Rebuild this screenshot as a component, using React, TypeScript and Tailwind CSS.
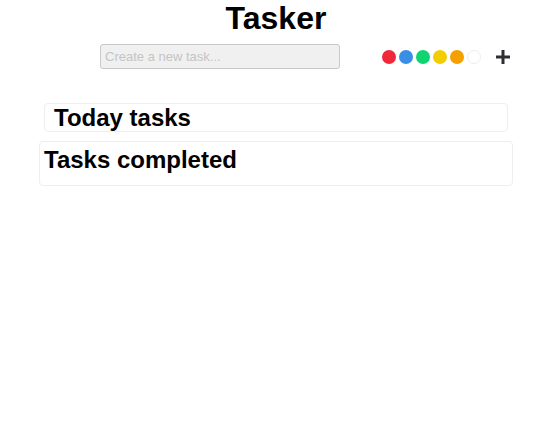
const colors = ['bg-[#f0283a]', 'bg-[#3b8ee5]', 'bg-[#10d46f]', 'bg-[#f2cd00]', 'bg-[#f5a000]', 'bg-white border border-[#eeeeee]'];

export default function App() {
  return (
    <div className="min-h-screen bg-white text-black" style={{ fontFamily: '"Liberation Sans", Arial, sans-serif' }}>
      <h1 className="w-[552px] text-center text-[32px] font-bold leading-[37px]">Tasker</h1>

      <div className="mt-[7px] flex items-center pl-[100px]">
        <input
          placeholder="Create a new task..."
          className="h-[25px] w-[240px] rounded-[3px] border border-[#c8c8c8] bg-[#f0f0f0] px-[4px] text-[13px] placeholder:text-[#c4c4c4] focus:outline-none"
        />
        <div className="ml-[42px] flex gap-[3px]">
          {colors.map((c) => (
            <span key={c} className={`h-[14px] w-[14px] rounded-full ${c}`} />
          ))}
        </div>
        <button className="ml-[15px] flex h-[14px] w-[14px] items-center justify-center">
          <svg width="14" height="14" viewBox="0 0 14 14">
            <rect x="5.5" y="0" width="3" height="14" fill="#2f2f33" />
            <rect x="0" y="5.5" width="14" height="3" fill="#2f2f33" />
          </svg>
        </button>
      </div>

      <div className="mt-[34px] flex flex-col gap-[9px]">
        <div className="ml-[44px] w-[464px] rounded-[4px] border border-[#eeeeee] pl-[9px]">
          <h2 className="text-[24px] font-bold leading-[27px]">Today tasks</h2>
        </div>
        <div className="ml-[39px] w-[474px] rounded-[4px] border border-[#eeeeee] pl-[4px] pt-[4px] pb-[12px]">
          <h2 className="text-[24px] font-bold leading-[27px]">Tasks completed</h2>
        </div>
      </div>
    </div>
  );
}
